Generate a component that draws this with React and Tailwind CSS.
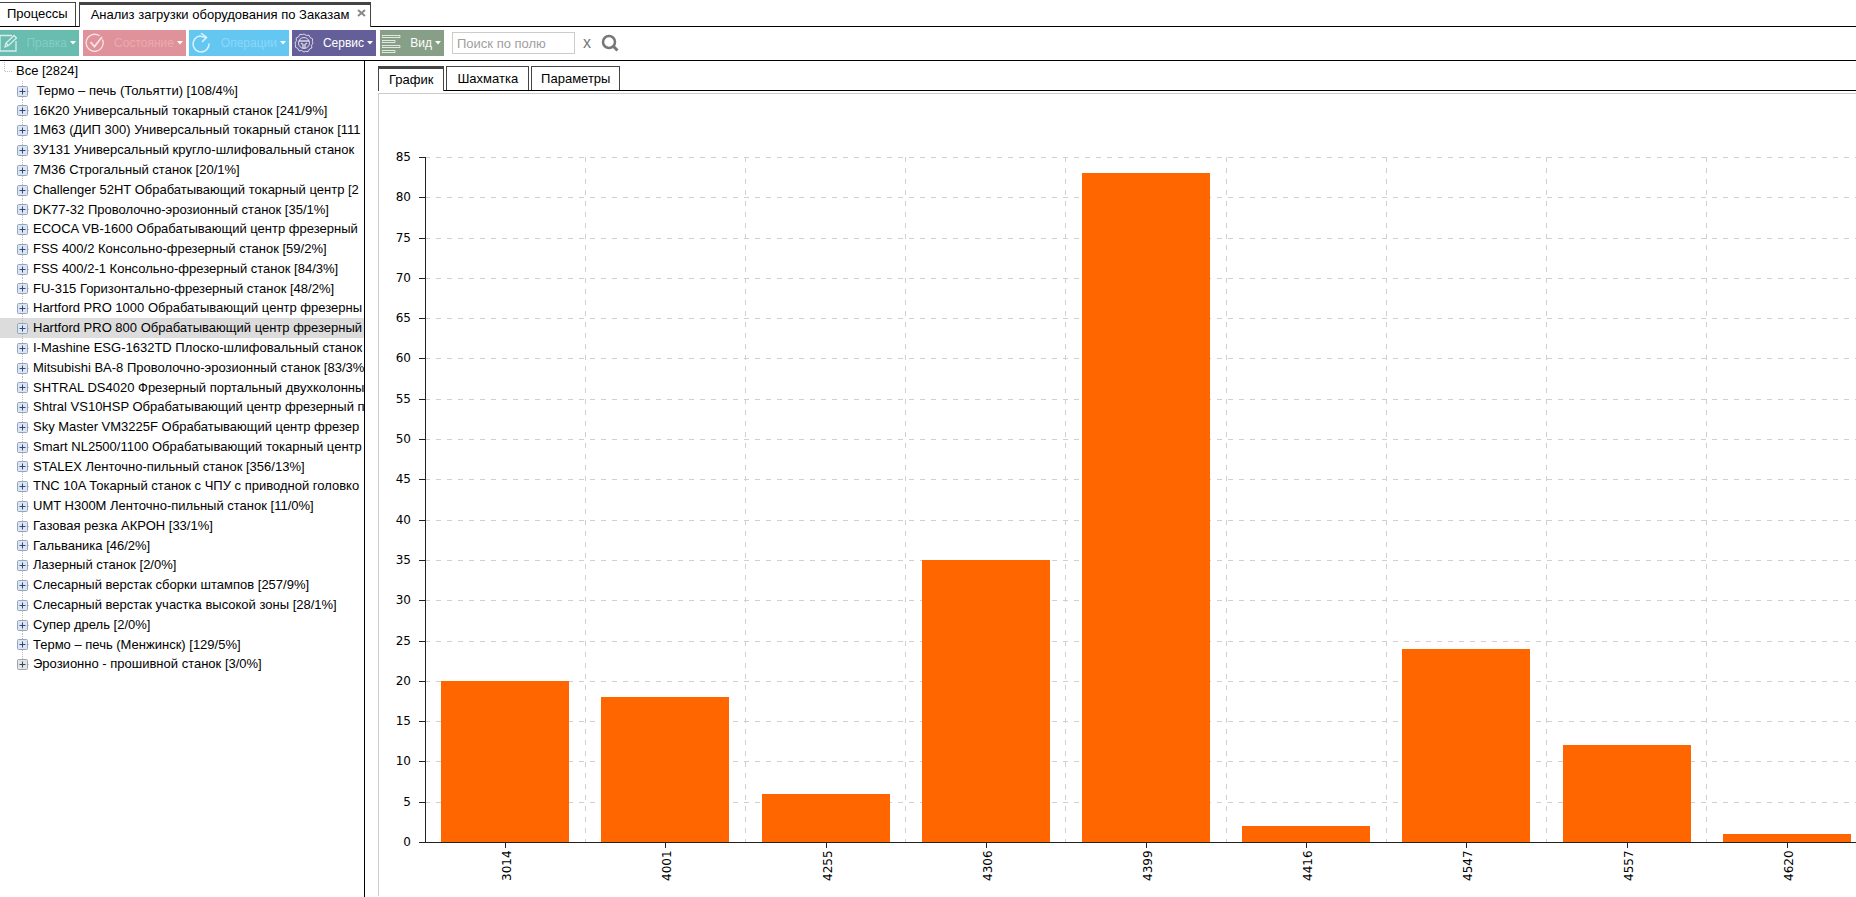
import React, { useState } from "react";

const machines = [
  "\u00a0Термо – печь (Тольятти) [108/4%]",
  "16К20 Универсальный токарный станок [241/9%]",
  "1М63 (ДИП 300) Универсальный токарный станок [111",
  "3У131 Универсальный кругло-шлифовальный станок",
  "7М36 Строгальный станок [20/1%]",
  "Challenger 52HT Обрабатывающий токарный центр [2",
  "DK77-32 Проволочно-эрозионный станок [35/1%]",
  "ECOCA VB-1600 Обрабатывающий центр фрезерный",
  "FSS 400/2 Консольно-фрезерный станок [59/2%]",
  "FSS 400/2-1 Консольно-фрезерный станок [84/3%]",
  "FU-315 Горизонтально-фрезерный станок [48/2%]",
  "Hartford PRO 1000 Обрабатывающий центр фрезерны",
  "Hartford PRO 800 Обрабатывающий центр фрезерный",
  "I-Mashine ESG-1632TD Плоско-шлифовальный станок",
  "Mitsubishi BA-8 Проволочно-эрозионный станок [83/3%",
  "SHTRAL DS4020 Фрезерный портальный двухколонны",
  "Shtral VS10HSP Обрабатывающий центр фрезерный п",
  "Sky Master VM3225F Обрабатывающий центр фрезер",
  "Smart NL2500/1100 Обрабатывающий токарный центр",
  "STALEX Ленточно-пильный станок [356/13%]",
  "TNC 10A Токарный станок с ЧПУ с приводной головко",
  "UMT H300M Ленточно-пильный станок [11/0%]",
  "Газовая резка АКРОН [33/1%]",
  "Гальваника [46/2%]",
  "Лазерный станок [2/0%]",
  "Слесарный верстак сборки штампов [257/9%]",
  "Слесарный верстак участка высокой зоны [28/1%]",
  "Супер дрель [2/0%]",
  "Термо – печь (Менжинск) [129/5%]",
  "Эрозионно - прошивной станок [3/0%]",
];

const orders = [
  { id: "3014", value: 20 },
  { id: "4001", value: 18 },
  { id: "4255", value: 6 },
  { id: "4306", value: 35 },
  { id: "4399", value: 83 },
  { id: "4416", value: 2 },
  { id: "4547", value: 24 },
  { id: "4557", value: 12 },
  { id: "4620", value: 1 },
];

const EditIcon = () => (
  <svg width="18" height="18" viewBox="0 0 18 18" fill="none" stroke="currentColor" strokeWidth="1.3">
    <path d="M12 1.5H0V17h16V7" />
    <path d="M5 13l1-4 8-7.500 2.500 2.500-8 7.500zM6 9l2.500 3" />
  </svg>
);

const CheckIcon = () => (
  <svg width="20" height="20" viewBox="0 0 20 20" fill="none" stroke="currentColor" strokeWidth="1.3">
    <path d="M17.500 6.500A8.500 8.500 0 1 1 14.500 2.800" />
    <path d="M5.500 9l4 4.500L17 4" strokeWidth="1.800" />
  </svg>
);

const RefreshIcon = () => (
  <svg width="20" height="20" viewBox="0 0 20 20" fill="none" stroke="currentColor" strokeWidth="1.600">
    <path d="M18 10.500a8 8 0 1 1-9-7.500l6 1.500" />
    <path d="M10 0l5.500 4.500L11 9" />
  </svg>
);

const GearIcon = () => (
  <svg width="20" height="20" viewBox="0 0 20 20" fill="none" stroke="currentColor" strokeWidth="1">
    <path d="M10 1l2.300 1.400 2.700-.2 1.200 2.400 2.400 1.200-.2 2.700L19 10l-1.400 2.300.2 2.700-2.400 1.200-1.200 2.400-2.700-.2L10 19l-2.300-1.400-2.700.2-1.200-2.400-2.400-1.200.2-2.700L1 10l1.400-2.300L2.200 5l2.400-1.200L5.800 1.400l2.700.2z" />
    <circle cx="10" cy="10" r="5.500" />
    <path d="M5 8h10M7 10l2 1.500V15M13 10l-2 1.500V15" strokeWidth="1.400" />
  </svg>
);

const ViewIcon = () => (
  <svg width="19" height="19" viewBox="0 0 19 19" fill="none" stroke="currentColor" strokeWidth="1">
    <path d="M0 1.500h18v2H0zM0 6.500h13v2H0zM0 11.500h18v2H0zM0 16.500h13v2H0z" />
  </svg>
);

const actions = [
  { label: "Правка", icon: EditIcon, box: "w-[79px] mr-1 bg-[#68bcb0]", text: "text-[#86cdc3]" },
  { label: "Состояние", icon: CheckIcon, box: "w-[103px] mr-[3px] pl-[2px] bg-[#e0929b]", text: "text-[#eaaab1]" },
  { label: "Операции", icon: RefreshIcon, box: "w-[100px] mr-[3px] pl-[2px] bg-[#63c7f2]", text: "text-[#8cd7f8]" },
  { label: "Сервис", icon: GearIcon, box: "w-[84px] mr-1 pl-[2px] bg-[#645f98]", text: "text-white" },
  { label: "Вид", icon: ViewIcon, box: "w-[64px] pl-[2px] bg-[#869f86]", text: "text-white" },
];

const Toolbar = () => (
  <div className="flex items-center h-[34px] pb-px border-b border-black">
    {actions.map(({ label, icon: Icon, box, text }) => (
      <button key={label} className={`flex shrink-0 items-center h-[26px] pr-[3px] ${box}`}>
        <span className="text-white/75">
          <Icon />
        </span>
        <span className={`ml-auto text-[12px] ${text}`}>{label}</span>
        <svg className="ml-[3px]" width="6" height="4" viewBox="0 0 6 4" fill="#fff">
          <path d="M0 0h6L3 3.500z" />
        </svg>
      </button>
    ))}
    <input
      type="text"
      aria-label="Поиск по полю"
      placeholder="Поиск по полю"
      className="w-[123px] h-[22px] ml-2 px-1 border border-[#ccc] text-[13px] placeholder:text-[#a0a0a0] outline-none"
    />
    <button aria-label="Очистить" className="ml-2 text-[16px] leading-4 text-[#777]">x</button>
    <button aria-label="Найти" className="ml-[10px] text-[#777]">
      <svg width="18" height="18" viewBox="0 0 18 18" fill="none" stroke="currentColor">
        <circle cx="8" cy="8" r="6" strokeWidth="2.500" />
        <path d="M12 12l4.500 4.500" strokeWidth="3" />
      </svg>
    </button>
  </div>
);

// Expander with the dotted branch line running behind it
const PlusIcon = ({ gray }) => (
  <svg className="shrink-0" width="13" height="20" viewBox="0 0 13 20">
    <path d={gray ? "M5.500 0v5" : "M5.500 0v20"} stroke="#bbb" strokeDasharray="1 1" />
    <path d="M11 10.500h2" stroke="#bbb" strokeDasharray="1 1" />
    <rect x="0.500" y="5.500" width="10" height="10" rx="1" fill="#dfe5ee" stroke={gray ? "#a5a5a5" : "#93a5c2"} />
    <path d="M5.500 7.500v6M2.500 10.500h6" stroke={gray ? "#444" : "#2b4a80"} />
  </svg>
);

const Tree = () => {
  const [selected, setSelected] = useState(12);

  return (
    <aside className="w-[365px] shrink-0 overflow-hidden border-r border-black text-[13px]">
      <ul className="grid h-[613px] auto-rows-fr whitespace-nowrap">
        <li className="flex items-center pl-1">
          <svg className="mr-1" width="8" height="18" viewBox="0 0 8 18" fill="none" stroke="#bbb" strokeDasharray="1 1">
            <path d="M0.500 0v9.500H8" />
          </svg>
          Все [2824]
        </li>
        {machines.map((name, i) => (
          <li key={name} className={i === selected ? "bg-[#dcdcdc]" : ""}>
            <button onClick={() => setSelected(i)} className="flex items-center gap-[3px] h-full pl-[17px]">
              <PlusIcon gray={i === machines.length - 1} />
              <span>{name}</span>
            </button>
          </li>
        ))}
      </ul>
    </aside>
  );
};

// Plot geometry
const LEFT = 46;
const TOP = 63;
const BOTTOM = 748;
const STEP = 1442 / orders.length;

const Chart = () => {
  const y = (value) => Math.round(BOTTOM - (value * (BOTTOM - TOP)) / 85);
  const ticks = Array.from({ length: 18 }, (_, i) => i * 5);

  return (
    <svg className="block w-full h-[802px]" fontFamily="'DejaVu Sans', sans-serif" fontSize="12">
      <g stroke="#d0d0d0" strokeDasharray="5 6" shapeRendering="crispEdges">
        {ticks.slice(1).map((t) => (
          <line key={t} x1={LEFT} x2="100%" y1={y(t)} y2={y(t)} />
        ))}
        {orders.slice(1).map((o, i) => (
          <line key={o.id} x1={LEFT + (i + 1) * STEP} x2={LEFT + (i + 1) * STEP} y1={TOP} y2={BOTTOM} />
        ))}
      </g>
      {orders.map((o, i) => {
        const center = Math.round(LEFT + (i + 0.5) * STEP);
        return (
          <g key={o.id}>
            <rect x={center - 64} y={y(o.value)} width="128" height={BOTTOM - y(o.value)} fill="#ff6600" />
            <path d={`M${center} ${BOTTOM}v6`} stroke="#222" shapeRendering="crispEdges" />
            <text transform={`translate(${center + 6} ${BOTTOM + 39}) rotate(-90)`}>{o.id}</text>
          </g>
        );
      })}
      <g stroke="#222" shapeRendering="crispEdges">
        <line x1={LEFT} x2={LEFT} y1={TOP} y2={BOTTOM} />
        <line x1={LEFT} x2="100%" y1={BOTTOM} y2={BOTTOM} />
        {ticks.map((t) => (
          <line key={t} x1={LEFT - 6} x2={LEFT} y1={y(t)} y2={y(t)} />
        ))}
      </g>
      <g textAnchor="end">
        {ticks.map((t) => (
          <text key={t} x={LEFT - 14} y={y(t) + 4}>{t}</text>
        ))}
      </g>
    </svg>
  );
};

const App = () => {
  return (
    <div className="flex flex-col min-h-screen overflow-hidden bg-white text-black font-['Liberation_Sans',sans-serif]">
      <nav className="flex items-end h-[27px] border-b border-black text-[13px]">
        <button className="h-6 px-[7px] pb-px border-t border-r border-[#444]">Процессы</button>
        <div className="flex h-[25px] -mb-px ml-[3px] pl-[11px] pr-1 border-x border-t-3 border-[#444] bg-white">
          <button className="pb-[2px]">Анализ загрузки оборудования по Заказам</button>
          <button aria-label="Закрыть" className="self-start mt-1 ml-2 text-[#888]">
            <svg width="9" height="8" viewBox="0 0 9 8" stroke="currentColor" strokeWidth="2">
              <path d="M1 1l7 6M8 1L1 7" />
            </svg>
          </button>
        </div>
      </nav>
      <Toolbar />
      <div className="flex flex-1">
        <Tree />
        <main className="flex-1 min-w-0 pt-[5px] pl-[13px]">
          <div className="flex items-end h-[25px] gap-[2px] border-b border-black text-[13px]">
            <button className="h-[25px] -mb-px px-[10px] border-x border-t-3 border-[#444] bg-white">График</button>
            <button className="h-6 px-[10px] border-x border-t border-[#444]">Шахматка</button>
            <button className="h-6 px-[9px] border-x border-t border-[#444]">Параметры</button>
          </div>
          <div className="mt-[2px] border-t border-l border-[#ccc]">
            <Chart />
          </div>
        </main>
      </div>
    </div>
  );
};

export default App;
